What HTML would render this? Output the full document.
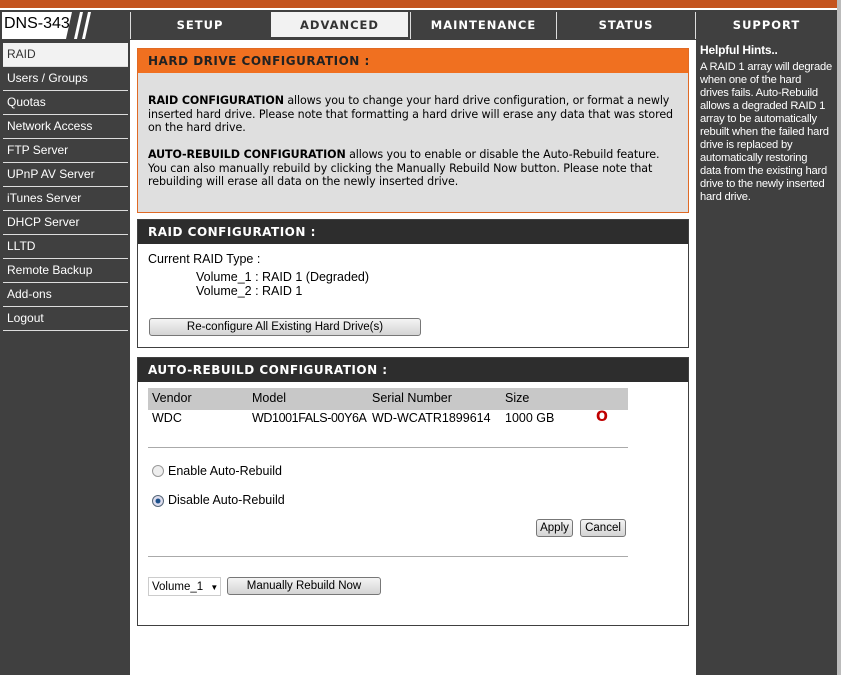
<!DOCTYPE html>
<html><head><style>
*{margin:0;padding:0;box-sizing:border-box}
body{width:841px;height:675px;background:#fff;position:relative;overflow:hidden;font-family:"DejaVu Sans",Verdana,sans-serif;}
.a{position:absolute}
.top{left:0;top:0;width:837px;height:8px;background:#c4541f}
.navbar{left:0;top:10px;width:837px;height:30px;background:#404040}
.tab{position:absolute;top:12px;height:27px;background:#404040;color:#fff;font-weight:bold;font-size:11.5px;letter-spacing:1px;text-align:center;line-height:27px;border-left:1px solid #ddd}
.side{left:0;top:40px;width:130px;height:635px;background:#404040}
.si{position:absolute;left:3px;width:125px;height:24px;color:#fff;font-family:"Liberation Sans",sans-serif;font-size:12px;line-height:23px;padding-left:4px;border-bottom:1px solid #ddd}
.hint{left:696px;top:40px;width:141px;height:635px;background:#404040;color:#fff;font-size:11.2px;padding:4px 4px;line-height:13px;font-family:"Liberation Sans",sans-serif;white-space:nowrap;letter-spacing:-0.2px;overflow:hidden}
.box{position:absolute;left:137px;width:552px;border:1px solid #404040;background:#fff}
.hd{height:24px;background:#2d2d2d;color:#fff;font-weight:bold;font-size:12px;letter-spacing:.5px;line-height:25px;padding-left:10px}
.t{font-family:"Liberation Sans",sans-serif;font-size:12.5px;color:#000;white-space:nowrap}
.btn{position:absolute;height:18px;border:1px solid #777;border-radius:3px;background:linear-gradient(#f4f4f4,#d4d4d4);font-family:"Liberation Sans",sans-serif;font-size:11.5px;text-align:center;line-height:16px;white-space:nowrap}
.hr{position:absolute;left:10px;width:480px;height:1px;background:#aaa}
</style></head><body>
<div class="a top"></div>
<div class="a navbar"></div>
<svg class="a" style="left:0;top:12px" width="130" height="27"><polygon points="2,0 72,0 66,27 2,27" fill="#fff"/><polygon points="74,27 80,0 83,0 77,27" fill="#fff"/><polygon points="82,27 88,0 91,0 85,27" fill="#fff"/></svg>
<div class="a" style="left:4px;top:15px;font-family:'Liberation Sans',sans-serif;font-size:16px">DNS-343</div>
<div class="tab" style="left:130px;width:139px">SETUP</div>
<div class="tab" style="left:269px;width:141px;background:#f2f2f2;color:#333;border:2px solid #404040;border-top:0">ADVANCED</div>
<div class="tab" style="left:410px;width:146px">MAINTENANCE</div>
<div class="tab" style="left:556px;width:139px">STATUS</div>
<div class="tab" style="left:695px;width:142px">SUPPORT</div>
<div class="a" style="left:837px;top:0;width:4px;height:675px;background:#bbb"></div>
<div class="a side"></div>
<div class="si" style="top:43px;background:#f2f2f2;color:#333">RAID</div>
<div class="si" style="top:67px">Users / Groups</div>
<div class="si" style="top:91px">Quotas</div>
<div class="si" style="top:115px">Network Access</div>
<div class="si" style="top:139px">FTP Server</div>
<div class="si" style="top:163px">UPnP AV Server</div>
<div class="si" style="top:187px">iTunes Server</div>
<div class="si" style="top:211px">DHCP Server</div>
<div class="si" style="top:235px">LLTD</div>
<div class="si" style="top:259px">Remote Backup</div>
<div class="si" style="top:283px">Add-ons</div>
<div class="si" style="top:307px">Logout</div>
<div class="a hint"><b style="font-size:12px">Helpful Hints..</b><div style="margin-top:3px">A RAID 1 array will degrade<br>when one of the hard<br>drives fails. Auto-Rebuild<br>allows a degraded RAID 1<br>array to be automatically<br>rebuilt when the failed hard<br>drive is replaced by<br>automatically restoring<br>data from the existing hard<br>drive to the newly inserted<br>hard drive.</div></div>

<div class="box" style="top:48px;height:165px;border-color:#e06a25;background:#dfdfdf">
<div class="hd" style="background:#f07020;color:#222">HARD DRIVE CONFIGURATION :</div>
<div style="padding:21px 8px 0 10px;line-height:13.5px;font-size:11.1px;letter-spacing:-0.1px;color:#000"><b>RAID CONFIGURATION</b> allows you to change your hard drive configuration, or format a newly inserted hard drive. Please note that formatting a hard drive will erase any data that was stored on the hard drive.<br><br><b>AUTO-REBUILD CONFIGURATION</b> allows you to enable or disable the Auto-Rebuild feature. You can also manually rebuild by clicking the Manually Rebuild Now button. Please note that rebuilding will erase all data on the newly inserted drive.</div>
</div>

<div class="box" style="top:219px;height:129px">
<div class="hd">RAID CONFIGURATION :</div>
<div class="a t" style="left:10px;top:32px">Current RAID Type :</div>
<div class="a t" style="left:58px;top:50px;line-height:14px">Volume_1 : RAID 1 (Degraded)<br>Volume_2 : RAID 1</div>
<div class="btn" style="left:11px;top:98px;width:272px">Re-configure All Existing Hard Drive(s)</div>
</div>

<div class="box" style="top:357px;height:269px">
<div class="hd">AUTO-REBUILD CONFIGURATION :</div>
<div class="a" style="left:10px;top:30px;width:480px;height:22px;background:#c8c8c8"></div>
<div class="a t" style="left:14px;top:33px">Vendor</div><div class="a t" style="left:114px;top:33px">Model</div><div class="a t" style="left:234px;top:33px">Serial Number</div><div class="a t" style="left:367px;top:33px">Size</div>
<div class="a t" style="left:14px;top:53px">WDC</div><div class="a t" style="left:114px;top:53px;letter-spacing:-0.4px">WD1001FALS-00Y6A</div><div class="a t" style="left:234px;top:53px">WD-WCATR1899614</div><div class="a t" style="left:367px;top:53px">1000 GB</div>
<div class="a" style="left:458px;top:51px;color:#c00000;font-weight:bold;font-size:14px">O</div>
<div class="hr" style="top:89px"></div>
<div class="a" style="left:14px;top:107px;width:12px;height:12px;border-radius:50%;border:1px solid #999;background:#eee"></div>
<div class="a t" style="left:30px;top:106px">Enable Auto-Rebuild</div>
<div class="a" style="left:14px;top:137px;width:12px;height:12px;border-radius:50%;border:1px solid #567;background:radial-gradient(#1a4f8a 30%,#dde 40%)"></div>
<div class="a t" style="left:30px;top:135px">Disable Auto-Rebuild</div>
<div class="btn" style="left:398px;top:161px;width:37px">Apply</div>
<div class="btn" style="left:442px;top:161px;width:46px">Cancel</div>
<div class="hr" style="top:198px"></div>
<div class="a t" style="left:10px;top:219px;width:73px;height:19px;border:1px solid #ccc;font-size:11.5px;padding:3px 3px;line-height:12px">Volume_1 <span style="font-size:8px;margin-left:4px">▼</span></div>
<div class="btn" style="left:89px;top:219px;width:154px">Manually Rebuild Now</div>
</div>
</body></html>
